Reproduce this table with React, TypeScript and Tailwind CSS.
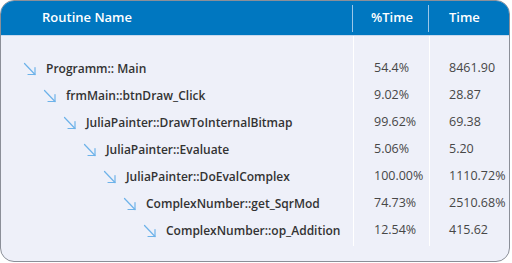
import React from "react"

type Row = { name: string; pct: string; time: string }

const rows: Row[] = [
  { name: "Programm:: Main", pct: "54.4%", time: "8461.90" },
  { name: "frmMain::btnDraw_Click", pct: "9.02%", time: "28.87" },
  { name: "JuliaPainter::DrawToInternalBitmap", pct: "99.62%", time: "69.38" },
  { name: "JuliaPainter::Evaluate", pct: "5.06%", time: "5.20" },
  { name: "JuliaPainter::DoEvalComplex", pct: "100.00%", time: "1110.72%" },
  { name: "ComplexNumber::get_SqrMod", pct: "74.73%", time: "2510.68%" },
  { name: "ComplexNumber::op_Addition", pct: "12.54%", time: "415.62" },
]

const indents = [
  "pl-[22px]",
  "pl-[42px]",
  "pl-[62px]",
  "pl-[82px]",
  "pl-[102px]",
  "pl-[122px]",
  "pl-[142px]",
]

function CallArrow() {
  return (
    <svg width="14" height="15" viewBox="0 0 14 15" fill="none" className="shrink-0 mt-[1px]">
      <path d="M1.5 1.5 L12 12.5" stroke="#6db2e9" strokeWidth="1.2" strokeLinecap="round" />
      <path d="M12 5.5 V12.5 H5" stroke="#6db2e9" strokeWidth="1.2" strokeLinecap="round" strokeLinejoin="round" />
    </svg>
  )
}

function Spacer({ h }: { h: string }) {
  return (
    <div className={`grid grid-cols-[352px_76px_1fr] ${h}`}>
      <div />
      <div className="border-l border-white" />
      <div className="border-l border-white" />
    </div>
  )
}

export default function App() {
  return (
    <div className="w-[512px] h-[263px] bg-white" style={{ fontFamily: '"Open Sans", sans-serif' }}>
      <div className="w-[510px] h-[262px] rounded-[14px] border border-[#8b8f98] bg-[#eef0f9] overflow-hidden flex flex-col">
        {/* Header */}
        <div className="grid grid-cols-[352px_76px_1fr] h-[36px] bg-[#0077c0] text-white text-[13px] font-semibold border-b border-[#c8d9ee] -mx-px -mt-px">
          <div className="flex items-center pl-[42px]">Routine Name</div>
          <div className="flex items-center pl-[19px] relative">
            <span className="absolute left-0 top-[5px] bottom-[3px] w-px bg-[#9cc7e8]" />
            %Time
          </div>
          <div className="flex items-center pl-[21px] relative">
            <span className="absolute left-0 top-[5px] bottom-[3px] w-px bg-[#9cc7e8]" />
            Time
          </div>
        </div>

        {/* Body */}
        <div className="flex flex-col">
          <Spacer h="h-[19px]" />
          {rows.map((r, i) => (
            <div key={r.name} className="grid grid-cols-[352px_76px_1fr] h-[27px] text-[12px]">
              <div className={`flex items-center gap-[9px] ${indents[i]} font-semibold text-[#333333]`}>
                <CallArrow />
                <span>{r.name}</span>
              </div>
              <div className="flex items-center pl-[20px] border-l border-white text-[12.5px] text-[#474747]">{r.pct}</div>
              <div className="flex items-center pl-[19px] border-l border-white text-[12.5px] text-[#474747]">{r.time}</div>
            </div>
          ))}
          <Spacer h="h-[2px]" />
        </div>
      </div>
    </div>
  )
}
